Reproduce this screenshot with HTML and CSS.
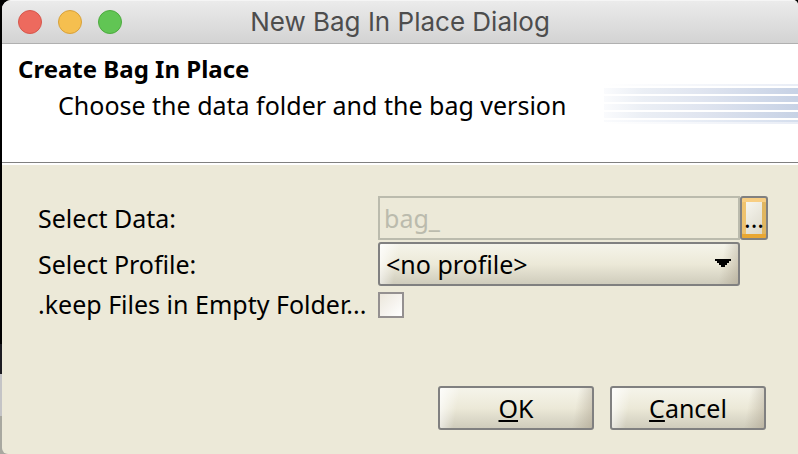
FILE: index.html
```html
<!DOCTYPE html>
<html lang="en">
<head>
<meta charset="utf-8">
<meta name="viewport" content="width=device-width, initial-scale=1">
<title>New Bag In Place Dialog</title>
<link rel="stylesheet" href="styles.css">
</head>
<body>
<main class="window">
  <header class="titlebar">
    <div class="lights">
      <button class="light red" type="button" aria-label="Close"></button>
      <button class="light yellow" type="button" aria-label="Minimize"></button>
      <button class="light green" type="button" aria-label="Zoom"></button>
    </div>
    <div class="window-title">New Bag In Place Dialog</div>
  </header>
  <section class="banner">
    <div class="banner-text">
      <h1>Create Bag In Place</h1>
      <p>Choose the data folder and the bag version</p>
    </div>
    <svg class="stripes" width="194" height="40" viewBox="0 0 194 40" aria-hidden="true" shape-rendering="crispEdges">
      <defs>
        <linearGradient id="fade" gradientUnits="userSpaceOnUse" x1="0" x2="194" y1="0" y2="0">
          <stop offset="0" stop-color="#fafbfd"/>
          <stop offset=".2" stop-color="#ebeff5"/>
          <stop offset=".5" stop-color="#e0e5f0"/>
          <stop offset="1" stop-color="#c7d2e5"/>
        </linearGradient>
        <linearGradient id="faint" gradientUnits="userSpaceOnUse" x1="0" x2="194" y1="0" y2="0">
          <stop offset="0" stop-color="#ffffff"/>
          <stop offset="1" stop-color="#e9edf6"/>
        </linearGradient>
        <linearGradient id="middle" gradientUnits="userSpaceOnUse" x1="0" x2="194" y1="0" y2="0">
          <stop offset="0" stop-color="#fafbfd"/>
          <stop offset="1" stop-color="#d5deed"/>
        </linearGradient>
      </defs>
      <path fill="url(#faint)" d="M0 0h194v2H0zM0 38h194v2H0z"/>
      <path fill="url(#fade)" d="M0 4h194v6H0zM0 12h194v6H0zM0 20h194v6H0zM0 28h194v6H0z"/>
      <path fill="url(#middle)" d="M0 36h194v2H0z"/>
    </svg>
  </section>
  <form class="content">
    <div class="fields">
      <label for="data">Select Data:</label>
      <input class="path" id="data" type="text" value="bag_" disabled>
      <button class="metal browse" type="button" aria-label="Browse">...</button>

      <label for="profile">Select Profile:</label>
      <div class="combo">
        <select class="metal" id="profile"><option>&lt;no profile&gt;</option></select>
        <svg class="arrow" width="16" height="8" viewBox="0 0 16 8" aria-hidden="true" shape-rendering="crispEdges"><path d="M0 0h16v2h-2v2h-2v2h-2v2H6V6H4V4H2V2H0z"/></svg>
      </div>

      <label class="keep" for="keep">.keep Files in Empty Folder...</label>
      <input class="check" id="keep" type="checkbox">
    </div>
    <div class="actions">
      <button class="metal action" type="button"><span class="key">O</span>K</button>
      <button class="metal action" type="button"><span class="key">C</span>ancel</button>
    </div>
  </form>
</main>
</body>
</html>
```
FILE: styles.css
```css
* {
  box-sizing: border-box;
}

body {
  margin: 0;
  min-height: 100vh;
  padding-left: 2px;
  display: flex;
  background: linear-gradient(#000 344px, #1c1c22 344px, #1c1c22 374px, #c4c4c6 374px, #c4c4c6 416px, #a8a8a0 416px);
  color: #000;
  font: 25px/32px "Noto Sans", "Open Sans", sans-serif;
}

.window {
  flex: 1;
  display: flex;
  flex-direction: column;
  border-radius: 9px 5px 0 6px;
  overflow: hidden;
  background: #ece9d8;
}

.titlebar {
  display: grid;
  grid-template-columns: 1fr auto 1fr;
  align-items: center;
  height: 44px;
  padding: 0 16px;
  border-top: 1px solid #f5f5f5;
  border-bottom: 1px solid #b0b0b0;
  background: linear-gradient(#ebebeb, #d3d3d3);
}

.lights {
  display: flex;
  gap: 16px;
}

.light {
  width: 24px;
  height: 24px;
  padding: 0;
  border: 1px solid;
  border-radius: 50%;
}

.red {
  background: #ed6a5e;
  border-color: #d6574c;
}

.yellow {
  background: #f5bf4f;
  border-color: #d8a13a;
}

.green {
  background: #61c554;
  border-color: #4dab3f;
}

.window-title {
  color: #4d4d4d;
  font: 26px/32px Inter, "Liberation Sans", sans-serif;
}

.banner {
  display: flex;
  justify-content: space-between;
  height: 119px;
  padding: 9px 0 0 16px;
  border-bottom: 1px solid #808080;
  background: #fff;
}

h1 {
  margin: 0;
  font-size: 24px;
  line-height: 32px;
}

.banner p {
  margin: 4px 0 0 40px;
}

.stripes {
  flex: none;
  margin-top: 31px;
}

.content {
  flex: 1;
  display: flex;
  flex-direction: column;
  justify-content: space-between;
  padding: 31px 30px 24px 36px;
  border-top: 2px solid #fff;
}

.fields {
  display: grid;
  grid-template-columns: 340px 1fr 28px;
  row-gap: 2px;
  align-items: center;
}

.path {
  width: 100%;
  height: 44px;
  padding: 0 4px;
  border: 2px solid #bbbbad;
  background: none;
  color: #bbbbad;
  font: inherit;
}

.metal {
  height: 44px;
  border: 2px solid #808080;
  border-radius: 3px;
  background:
    linear-gradient(100deg, #fffc, #fff0 20px),
    linear-gradient(280deg, #aaa08c88, #aaa08c00 20px),
    linear-gradient(#f5f4ea, #ece9d8 50%, #cfccbc);
  color: #000;
  font: inherit;
}

.browse {
  padding: 0;
  background: linear-gradient(135deg, #fafaf5, #d8d4c4);
  box-shadow: inset 0 4px #f8ce82, inset 0 -4px #e9a733, inset 4px 0 #efc36f, inset -4px 0 #e0b660;
}

.combo {
  position: relative;
}

.combo select {
  display: block;
  width: 100%;
  padding: 0 32px 0 6px;
  appearance: none;
}

.arrow {
  position: absolute;
  top: 17px;
  right: 9px;
  pointer-events: none;
}

.keep {
  grid-column: 1;
  white-space: nowrap;
}

.check {
  grid-column: 2;
  width: 26px;
  height: 26px;
  margin: 2px 0 0;
  appearance: none;
  border: 2px solid #949090;
  background: linear-gradient(135deg, #ece7dc, #fff);
}

.actions {
  display: flex;
  justify-content: flex-end;
  gap: 16px;
  padding-right: 2px;
}

.action {
  width: 156px;
  padding: 0;
}

.key {
  text-decoration: underline 2px;
  text-underline-offset: 2px;
}
```
